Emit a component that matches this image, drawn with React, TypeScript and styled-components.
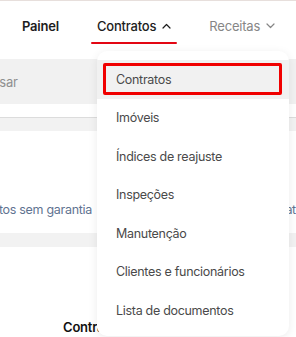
import styled, { createGlobalStyle } from "styled-components"

const Global = createGlobalStyle`
    body {
        margin: 0;
        background: #fff;
        font-family: Inter, "Noto Sans", sans-serif;
    }
`

const menuItems = [
    "Contratos",
    "Imóveis",
    "Índices de reajuste",
    "Inspeções",
    "Manutenção",
    "Clientes e funcionários",
    "Lista de documentos",
]

function Chevron({ up }: { up?: boolean }) {
    return (
        <svg width="9" height="6" viewBox="0 0 9 6" fill="none">
            <path
                d={up ? "M1 5L4.5 1.5L8 5" : "M1 1L4.5 4.5L8 1"}
                stroke="currentColor"
                strokeWidth="1.2"
                strokeLinecap="round"
                strokeLinejoin="round"
            />
        </svg>
    )
}

export default function App() {
    return (
        <Page>
            <Global />
            <Header>
                <NavItem $tone="strong">Painel</NavItem>
                <NavItem $tone="active">
                    Contratos <Chevron up />
                </NavItem>
                <NavItem $tone="muted">
                    Receitas <Chevron />
                </NavItem>
            </Header>

            <SearchBar>
                <span>Pesquisar</span>
            </SearchBar>

            <Band $line />

            <Summary>
                <SummaryCell $end>Contratos sem garantia</SummaryCell>
                <SummaryCell>Contratos ativos</SummaryCell>
            </Summary>

            <Band />

            <Title>Contratos</Title>

            <Dropdown>
                {menuItems.map((item, i) => (
                    <MenuItem key={item} $selected={i === 0}>
                        {item}
                    </MenuItem>
                ))}
            </Dropdown>
        </Page>
    )
}

const Page = styled.div`
    position: relative;
    width: 296px;
    height: 337px;
    overflow: hidden;
    border-top: 1px solid #e7dfdc;
    box-sizing: border-box;
`

const Header = styled.nav`
    display: flex;
    align-items: center;
    gap: 26px;
    height: 50px;
    padding-left: 16px;
    box-sizing: border-box;
`

const NavItem = styled.div<{ $tone: "strong" | "active" | "muted" }>`
    position: relative;
    display: flex;
    align-items: center;
    gap: 6px;
    padding: 0 6px;
    height: 36px;
    font-size: 13px;
    letter-spacing: -0.2px;
    font-weight: ${p => (p.$tone === "strong" ? 600 : p.$tone === "active" ? 500 : 400)};
    color: ${p => (p.$tone === "muted" ? "#868686" : "#1d1d1d")};

    ${p =>
        p.$tone === "active" &&
        `
        &::after {
            content: "";
            position: absolute;
            left: 0;
            right: 0;
            bottom: 0;
            height: 2.5px;
            border-radius: 2px;
            background: #e30613;
        }
    `}
`

const SearchBar = styled.div`
    display: flex;
    align-items: center;
    height: 45px;
    margin-top: 8px;
    margin-left: -41px;
    background: #f1f1f1;
    font-size: 13px;
    letter-spacing: -0.2px;
    color: #8f8f8f;
`

const Band = styled.div<{ $line?: boolean }>`
    height: ${p => (p.$line ? 13 : 14)}px;
    margin-top: ${p => (p.$line ? 13 : 17)}px;
    background: #f2f2f2;
    border-top: ${p => (p.$line ? "1px solid #dcdcdc" : "none")};
`

const Summary = styled.div`
    display: grid;
    grid-template-columns: 92px 1fr;
    column-gap: 135px;
    align-items: center;
    height: 14px;
    margin-top: 71px;
`

const SummaryCell = styled.span<{ $end?: boolean }>`
    display: flex;
    justify-content: ${p => (p.$end ? "flex-end" : "flex-start")};
    white-space: nowrap;
    font-size: 12.5px;
    letter-spacing: -0.3px;
    color: #5f7391;
`

const Title = styled.div`
    margin-top: 72px;
    padding-left: 63px;
    font-size: 13px;
    font-weight: 600;
    letter-spacing: -0.2px;
    color: #111;
`

const Dropdown = styled.div`
    position: absolute;
    z-index: 2;
    top: 50px;
    left: 97px;
    width: 192px;
    height: 285px;
    padding-top: 9px;
    box-sizing: border-box;
    background: #fff;
    border-radius: 10px;
    box-shadow: 0 2px 10px rgba(0, 0, 0, 0.08);
`

const MenuItem = styled.div<{ $selected?: boolean }>`
    position: relative;
    display: flex;
    align-items: center;
    height: 38.5px;
    padding-left: 19px;
    font-size: 12.5px;
    letter-spacing: -0.3px;
    color: #4a4a4a;
    background: ${p => (p.$selected ? "#f1f1f1" : "transparent")};

    ${p =>
        p.$selected &&
        `
        &::after {
            content: "";
            position: absolute;
            top: 3px;
            left: 6px;
            right: 7px;
            bottom: 4px;
            border: 3px solid #f00000;
            border-radius: 2px;
        }
    `}
`
